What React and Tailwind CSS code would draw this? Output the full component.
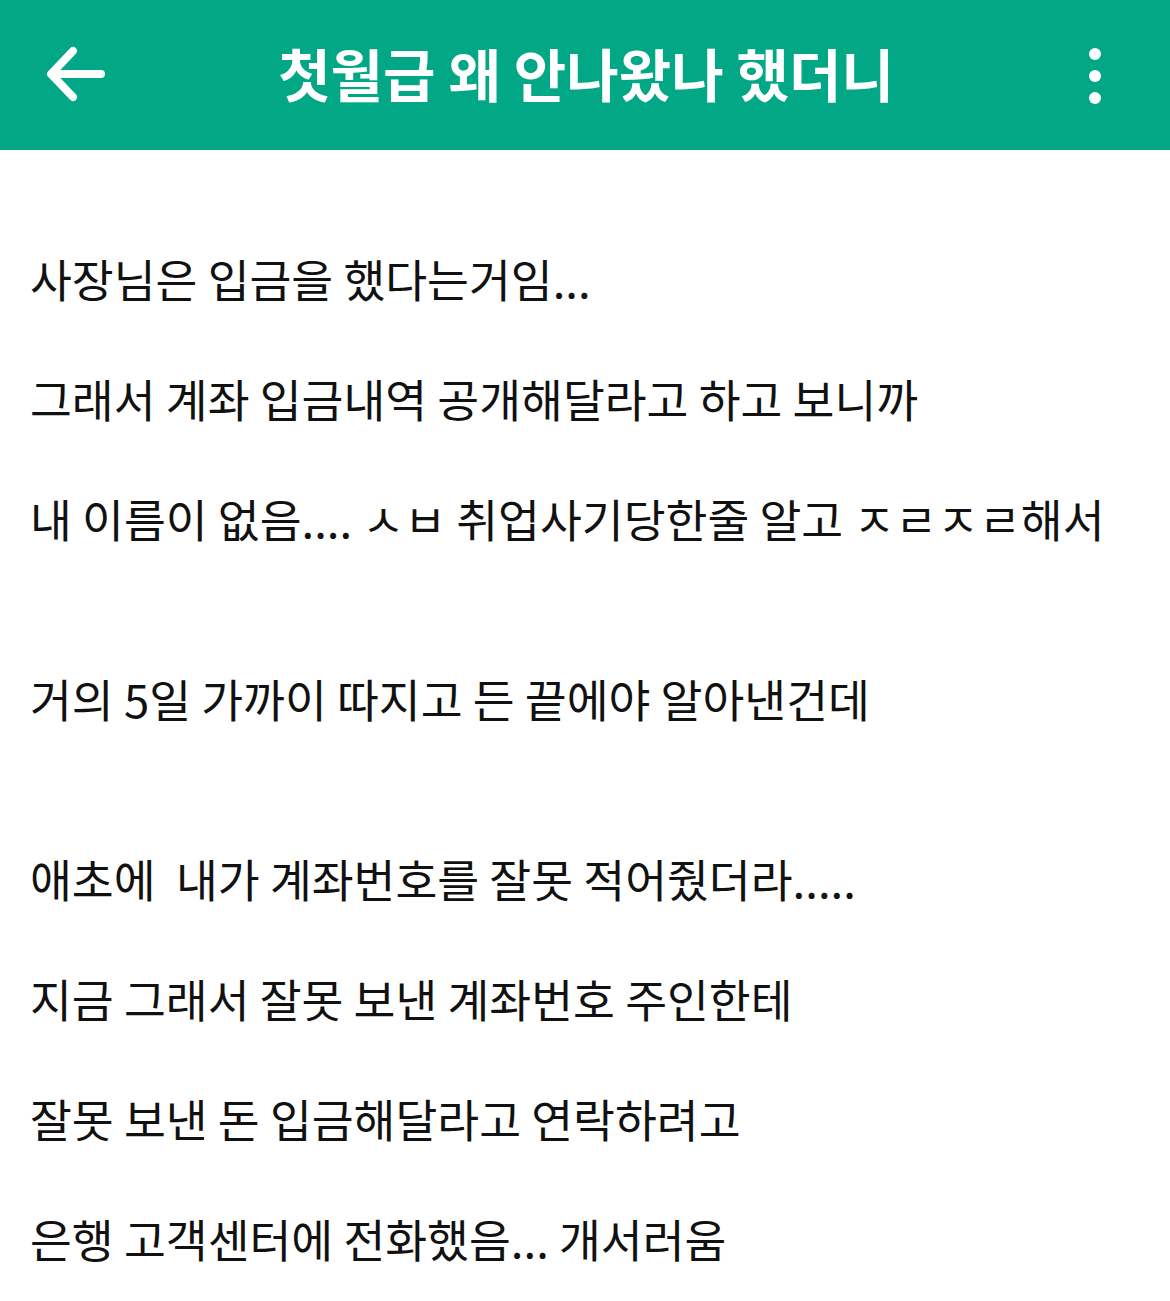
import React from "react";

const lines = [
    "사장님은 입금을 했다는거임...",
    "그래서 계좌 입금내역 공개해달라고 하고 보니까",
    "내 이름이 없음.... ㅅㅂ 취업사기당한줄 알고 ㅈㄹㅈㄹ해서",
    null,
    "거의 5일 가까이 따지고 든 끝에야 알아낸건데",
    null,
    "애초에  내가 계좌번호를 잘못 적어줬더라.....",
    "지금 그래서 잘못 보낸 계좌번호 주인한테",
    "잘못 보낸 돈 입금해달라고 연락하려고",
    "은행 고객센터에 전화했음... 개서러움",
];

const font = { fontFamily: '"Noto Sans CJK KR", "Noto Sans", sans-serif' };

export default function App() {
    return (
        <div className="w-[1170px] h-[1301px] bg-white overflow-hidden" style={font}>
            <header className="relative h-[150px] bg-[#02a886] flex items-center justify-center">
                <button className="absolute left-[42px] top-[43px] w-[66px] h-[62px] flex items-center justify-center">
                    <svg width="64" height="60" viewBox="0 0 64 60" fill="none" stroke="white" strokeWidth="8" strokeLinecap="round" strokeLinejoin="round">
                        <path d="M58 30H10" />
                        <path d="M30 7L8 30L30 53" />
                    </svg>
                </button>
                <h1 className="text-white font-bold text-[57px] leading-none whitespace-pre -mt-[6px] pl-[2px]">
                    첫월급 왜 안나왔나 했더니
                </h1>
                <div className="absolute left-[1089px] top-[48px] flex flex-col gap-[10px]">
                    <span className="block w-[12px] h-[12px] rounded-full bg-white" />
                    <span className="block w-[12px] h-[12px] rounded-full bg-white" />
                    <span className="block w-[12px] h-[12px] rounded-full bg-white" />
                </div>
            </header>
            <main className="pt-[68px] px-[30px] text-[#111] text-[45.5px]">
                {lines.map((line, i) =>
                    line === null ? (
                        <div key={i} className="h-[60px]" />
                    ) : (
                        <p key={i} className="h-[120px] leading-[120px] whitespace-pre">{line}</p>
                    )
                )}
            </main>
        </div>
    );
}
